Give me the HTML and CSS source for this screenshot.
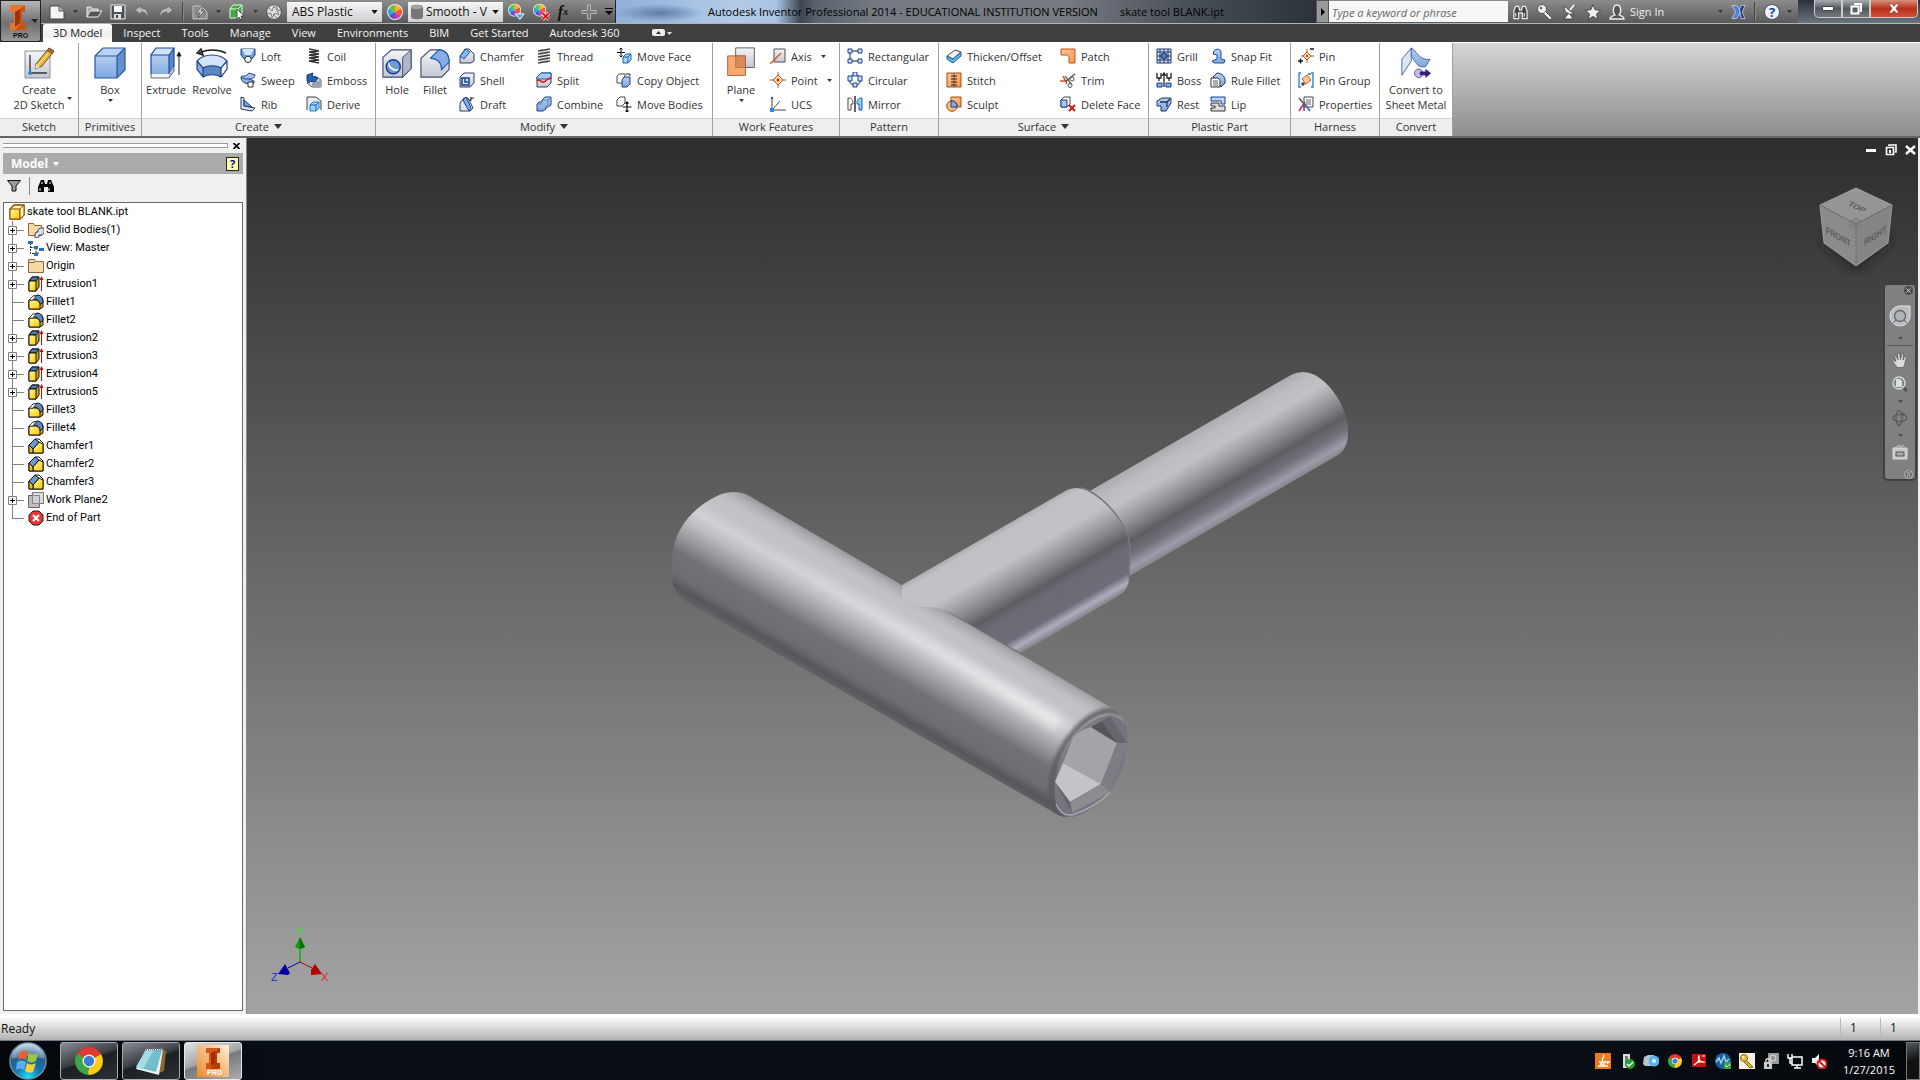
FILE: index.html
```html
<!DOCTYPE html>
<html lang="en">
<head>
<meta charset="utf-8">
<title>Autodesk Inventor Professional 2014</title>
<link rel="stylesheet" href="styles.css">
</head>
<body>
<svg class="sprite" width="0" height="0" aria-hidden="true">
  <defs>
    <linearGradient id="blue" x1="0" y1="0" x2="0" y2="1"><stop offset="0" stop-color="#b4cdf0"/><stop offset="1" stop-color="#7fa8de"/></linearGradient>
    <linearGradient id="grey" x1="0" y1="0" x2="0" y2="1"><stop offset="0" stop-color="#f4f5f8"/><stop offset="1" stop-color="#c3c8d2"/></linearGradient>
    <linearGradient id="gold" x1="0" y1="0" x2="1" y2="1"><stop offset="0" stop-color="#fff9a0"/><stop offset="1" stop-color="#ffc800"/></linearGradient>
    <linearGradient id="orange" x1="0" y1="0" x2="1" y2="1"><stop offset="0" stop-color="#ffc493"/><stop offset="1" stop-color="#f59a55"/></linearGradient>
  </defs>
  <symbol id="caret" viewBox="0 0 8 5"><path d="M0 0h8L4 5z" fill="currentColor"/></symbol>
  <symbol id="new" viewBox="0 0 16 16"><path d="M1 2h9l5 5v8H1z" fill="#f4f4f4" stroke="#444"/><path d="M10 2v5h5" fill="#bbb" stroke="#555"/></symbol>
  <symbol id="open" viewBox="0 0 16 16"><path d="M1 13V3h4l1 2h6v2" fill="#aaa" stroke="#eee"/><path d="M1 13l3-6h12l-4 6z" fill="#555" stroke="#eee"/></symbol>
  <symbol id="save" viewBox="0 0 16 16"><path d="M1 1h14v14H1z" fill="#4a5058" stroke="#eee"/><path d="M4 2h8v6H4z" fill="#fff"/><path d="M4 10h7v5H4z" fill="#ddd"/><path d="M6 11h2v3H6z" fill="#444"/></symbol>
  <symbol id="undo" viewBox="0 0 16 16"><path d="M1 6l6-5v3c5 0 8 4 7 10-1-4-3-6-7-6v3z" fill="#b8b8b8" stroke="#666"/></symbol>
  <symbol id="redo" viewBox="0 0 16 16"><path d="M15 6L9 1v3C4 4 1 8 2 14c1-4 3-6 7-6v3z" fill="#b8b8b8" stroke="#666"/></symbol>
  <symbol id="update" viewBox="0 0 16 16"><path d="M1 2h8l6 6v7H1z" fill="#8c8c8c" stroke="#c5c5c5"/><path d="M10 2l-6 7h4l-2 5 7-7H9l3-5z" fill="#c9c9c9" stroke="#666"/></symbol>
  <symbol id="pick" viewBox="0 0 16 16"><path d="M1 5l3-4h9v9l-3 4H1z" fill="#41a941" stroke="#d8ffd8"/><path d="M1 5h8v9M9 5l4-4" fill="none" stroke="#eaffea"/><path d="M8 5v10l2-2 2 3 1-1-1-3h3z" fill="#fff" stroke="#222" stroke-width=".7"/></symbol>
  <symbol id="ball" viewBox="0 0 16 16"><circle cx="8" cy="8" r="7.4" fill="#dcdcdc" stroke="#555"/><path d="M3 4l3 3 2-5 3 4 2 5-4-2-3 5-1-5-4 1M10 2l2 4 3 1M7 10l4 4" fill="none" stroke="#686868" stroke-width=".8"/></symbol>
  <symbol id="wheel" viewBox="0 0 16 16"><circle cx="8" cy="8" r="8" fill="#eee"/><path d="M8 8V1a7 7 0 016 3.500z" fill="#ffb02e"/><path d="M8 8l6-3.500a7 7 0 010 7z" fill="#f4562a"/><path d="M8 8l6 3.500A7 7 0 018 15z" fill="#d43a9a"/><path d="M8 8v7a7 7 0 01-6-3.500z" fill="#5a4ed0"/><path d="M8 8l-6 3.500a7 7 0 010-7z" fill="#28a4d8"/><path d="M8 8L2 4.500A7 7 0 018 1z" fill="#62c63a"/></symbol>
  <symbol id="wheeladd" viewBox="0 0 18 18"><use href="#wheel" width="14" height="14"/><path d="M8 11h9l-4.500 6z" fill="#35b4f0" stroke="#fff"/></symbol>
  <symbol id="wheeldel" viewBox="0 0 18 18"><use href="#wheel" width="14" height="14"/><path d="M10 10l7 7m0-7l-7 7" stroke="#fff" stroke-width="3.500"/><path d="M10 10l7 7m0-7l-7 7" stroke="#e01414" stroke-width="2.200"/></symbol>
  <symbol id="plus" viewBox="0 0 16 16"><path d="M6.500 1h3v5.500H15v3H9.500V15h-3V9.500H1v-3h5.500z" fill="#7a7a7a" stroke="#b5b5b5"/></symbol>
  <symbol id="binoc" viewBox="0 0 18 16"><path d="M2 15V7l2-5h3l1 4h2l1-4h3l2 5v8h-5V9H7v6z" fill="#444" stroke="#eee" stroke-width="1.300"/><path d="M4 9v4m9-4v4" stroke="#fff"/></symbol>
  <symbol id="key" viewBox="0 0 16 16"><path d="M8 7l7 7-2 2-7-7" fill="#fff" stroke="#444" stroke-width=".8"/><circle cx="5" cy="5" r="4.500" fill="#eee" stroke="#444" stroke-width=".8"/><circle cx="4" cy="4" r="1.200" fill="#555"/></symbol>
  <symbol id="dish" viewBox="0 0 16 16"><path d="M3 2c0 6 4 9 10 8zM7 10l-4 5h9l-3-5" fill="#f4f4f4" stroke="#333" stroke-width=".8"/><path d="M9 6l4-5" stroke="#fff" stroke-width="1.500"/></symbol>
  <symbol id="star" viewBox="0 0 16 16"><path d="M8 .8l2.200 5 5.300.5-4 3.600 1.200 5.300L8 12.400l-4.700 2.800 1.200-5.300-4-3.600 5.300-.5z" fill="#eee" stroke="#333" stroke-width=".8"/></symbol>
  <symbol id="user" viewBox="0 0 16 16"><path d="M1 15c0-3 3-3 5-4-3-3-2-10 2-10s5 7 2 10c2 1 5 1 5 4z" fill="#555" stroke="#eee" stroke-width="1.300"/></symbol>
  <symbol id="exch" viewBox="0 0 16 16"><path d="M1 1h5l4 5-1 4-3 5H1l4-7z" fill="#4f80d8" stroke="#dfe8ff" stroke-width=".7"/><path d="M15 1h-4L9 5l1 5 1 5h4l-3-7z" fill="#22407e" stroke="#dfe8ff" stroke-width=".7"/></symbol>
  <symbol id="sketch" viewBox="0 0 32 32"><path d="M2 4h25v27H2z" fill="url(#grey)" stroke="#8a8e98"/><path d="M7 8v18h17" fill="none" stroke="#333" stroke-width="1.300"/><circle cx="7" cy="26" r="2" fill="#2a86e0"/><path d="M13 17L26 1l5 3-12 15-7 3z" fill="#f3b52c" stroke="#5a4a30"/><path d="M15 18L28 3" stroke="#fff3b0"/><path d="M26 1l5 3-2 3-5-3z" fill="#a86a3a" stroke="#5a4a30" stroke-width=".5"/><path d="M13 17l-1 5 5-2z" fill="#f4e2c0"/></symbol>
  <symbol id="box" viewBox="0 0 32 32"><path d="M1 9h22v22H1z" fill="url(#blue)"/><path d="M1 9l8-8h22l-8 8z" fill="#b9d3f5"/><path d="M23 9l8-8v22l-8 8z" fill="#6690ca"/><path d="M1 9l8-8h22v22l-8 8H1zM1 9h22v22M23 9l8-8" fill="none" stroke="#2b58a5" stroke-width="1.200"/></symbol>
  <symbol id="extrude" viewBox="0 0 32 32"><path d="M1 8h18v23H1z" fill="url(#blue)"/><path d="M1 8l5-7h18l-5 7z" fill="#d2e3fa"/><path d="M19 8l5-7v23l-5 7z" fill="#5d86c2"/><path d="M1 27h18v4H1z" fill="#f2f4f8"/><path d="M19 27l5-7v4l-5 7z" fill="#c4cad6"/><path d="M1 27V8l5-7h18v19M1 8h18v19M19 8l5-7" fill="none" stroke="#1c4aa8" stroke-width="1.200"/><path d="M1 27v4h18l5-7v-4" fill="none" stroke="#666"/><path d="M29 28V6M27 9l2-4 2 4z" stroke="#222" fill="#222"/></symbol>
  <symbol id="revolve" viewBox="0 0 32 32"><path d="M1 14c7-8 23-8 30 0l-6 7c-5-3-13-3-18 0z" fill="#d2e3fa"/><path d="M7 21c5-3 13-3 18 0v9c-5-3-13-3-18 0z" fill="#5d86c2"/><path d="M1 14l6 7v9l-6-8z" fill="#88afe2"/><path d="M31 14l-6 7v9l6-8z" fill="#fff"/><path d="M1 14c7-8 23-8 30 0v8l-6 8c-5-3-13-3-18 0l-6-8zM1 14l6 7c5-3 13-3 18 0l6-7M7 21v9M25 21v9" fill="none" stroke="#1c3f80" stroke-width="1.200"/><path d="M3 6c8-4 19-4 27 0M5 2L1 6l6 2z" fill="none" stroke="#222" stroke-width="1.500"/></symbol>
  <symbol id="hole" viewBox="0 0 32 32"><path d="M1 10l9-8h21v20l-9 9H1z" fill="url(#grey)" stroke="#3a4a70" stroke-width="1.200"/><path d="M22 10l9-8v20l-9 9z" fill="#b2b7c4" stroke="#3a4a70"/><circle cx="12" cy="20" r="7.500" fill="#6f9ad8" stroke="#123a8a" stroke-width="1.500"/><path d="M7 14a8 8 0 0012 9C12 23 8 20 7 14" fill="#fff"/></symbol>
  <symbol id="fillet" viewBox="0 0 32 32"><path d="M1 11l10-9h10c7 1 10 6 10 12v9l-8 8H1z" fill="url(#grey)" stroke="#3a4a70" stroke-width="1.200"/><path d="M11 11l9-9c7 0 11 5 11 13l-8 8c0-7-4-12-12-12" fill="#85ade6" stroke="#1c56b4" stroke-width="1.200"/></symbol>
  <symbol id="plane" viewBox="0 0 32 36"><path d="M10 1h21v22H10z" fill="url(#grey)" stroke="#4a4f5a"/><path d="M1 10h20v22H1z" fill="#f7a063" fill-opacity=".9" stroke="#b4571a"/><path d="M10 10h11v13H10z" fill="#d98a58" stroke="#8a5a3a" stroke-width=".6"/></symbol>
  <symbol id="convert" viewBox="0 0 32 34"><path d="M1 13L11 1v14L1 30z" fill="#d8e6f6" stroke="#44669a"/><path d="M11 1c5 2 8 14 20 12l-5 8c-9 2-11-7-15-11z" fill="url(#blue)" stroke="#44669a"/><circle cx="19" cy="28" r="4.500" fill="#c9bdf0" stroke="#5a4aa0"/><path d="M20 26h6v-3l6 5-6 5v-3h-6z" fill="#3a1f7a"/></symbol>
  <symbol id="loft" viewBox="0 0 16 16"><path d="M1 1h14v6l-4 5H5L1 7z" fill="#6f9ad8" stroke="#1f3f80"/><path d="M2 1h12l-3 6H5z" fill="#d2e3fa"/><circle cx="8" cy="11.500" r="3.200" fill="#fff" stroke="#333"/></symbol>
  <symbol id="sweep" viewBox="0 0 16 16"><path d="M1 5c2-2 4 0 6-2l2-2 6 2c-1 4-3 4-6 4l5 2v2l-3 1c-4 0-10-1-10-7z" fill="url(#blue)" stroke="#1f3f80"/><path d="M8 10h5v5H8z" fill="#fff" stroke="#333"/><path d="M1 5l4 2 4 0" fill="none" stroke="#1f3f80"/></symbol>
  <symbol id="rib" viewBox="0 0 16 16"><path d="M1 1l3 1v8l11 2-3 3-11-2z" fill="#dfe6f2" stroke="#223a66"/><path d="M4 4l8 7-8-1z" fill="#6fa0e4" stroke="#1f3f80"/></symbol>
  <symbol id="coil" viewBox="0 0 16 16"><path d="M3 1l10 2M3 4l10-1M3 4l10 2M3 7l10-1M3 7l10 2M3 10l10-1M3 10l10 2M3 13l10-1M3 13l10 2" stroke="#333" stroke-width="1.300"/></symbol>
  <symbol id="emboss" viewBox="0 0 16 16"><path d="M1 11l8-7 6 4v7H6z" fill="#d5dae4" stroke="#555d70"/><path d="M6 15v-4l9-3v7z" fill="#9aa2b2"/><path d="M1 3l6-2-1 3 6 2-3 4-5-1-1 2-2-2z" fill="#2562b4" stroke="#153b7c"/></symbol>
  <symbol id="derive" viewBox="0 0 16 16"><path d="M1 14V1h9l5 4v9" fill="#e8eaee" stroke="#444"/><path d="M4 9l3-3h6v6l-3 3H4z" fill="#9cd0f8" stroke="#1d82c4"/><path d="M4 9h6v6m0-6l3-3" fill="none" stroke="#1d62b4"/></symbol>
  <symbol id="chamfer" viewBox="0 0 16 16"><path d="M1 8l5-7h4l5 5v7l-3 2H1z" fill="url(#grey)" stroke="#2c3c60"/><path d="M1 8l6-7 4 3-6 7z" fill="#8bb5ec" stroke="#1c56b4"/></symbol>
  <symbol id="shell" viewBox="0 0 16 16"><path d="M1 5l4-4h10v10l-4 4H1z" fill="url(#grey)" stroke="#2c3c60"/><path d="M3 6h7v7H3z" fill="#dbe8fb" stroke="#16408c" stroke-width="1.500"/><path d="M6 7v3h3" fill="none" stroke="#16408c" stroke-width="1.500"/></symbol>
  <symbol id="draft" viewBox="0 0 16 16"><path d="M1 7l4-5h4l5 10-3 3H1z" fill="#dfe3ea" stroke="#2c3c60"/><path d="M4 4l3-3 5 11-2 3z" fill="#85b0ea" stroke="#16408c"/><path d="M11 5c0-2 1-3 4-3M12 1v4" fill="none" stroke="#222"/></symbol>
  <symbol id="thread" viewBox="0 0 16 16"><path d="M4 1h8v14H4z" fill="#ddd"/><path d="M2 3l12-2M2 6l12-2M2 9l12-2M2 12l12-2M2 15l12-2" stroke="#444" stroke-width="1.300"/></symbol>
  <symbol id="split" viewBox="0 0 16 16"><path d="M1 5l4-4h10v10l-4 4H1z" fill="url(#grey)" stroke="#2c3c60"/><path d="M1 5l4-4h10v6H1z" fill="#a8c8f2" stroke="#1c56b4"/><path d="M1 9c3-3 4 2 7 1s3-4 7-4" fill="none" stroke="#e01818" stroke-width="1.600"/></symbol>
  <symbol id="combine" viewBox="0 0 16 16"><path d="M6 4l3-3h6v8l-3 2h-2v2l-3 2H1V8l2-2h3z" fill="url(#blue)" stroke="#1f3f80"/><path d="M6 4h6v7M12 4l3-3M1 8h5" fill="none" stroke="#5c82bd"/></symbol>
  <symbol id="moveface" viewBox="0 0 16 16"><path d="M5 0v9M1 4.500h8M3.500 1.500L5 0l1.500 1.500M3.500 7.500L5 9l1.500-1.500" fill="none" stroke="#111"/><path d="M7 9l3-3h5v6l-3 3H7z" fill="#a8d4f8" stroke="#1b5fae"/><path d="M7 9h5v6m0-6l3-3" fill="none" stroke="#1b5fae"/></symbol>
  <symbol id="copyobj" viewBox="0 0 16 16"><path d="M1 4l2-2h6v6l-2 3H1z" fill="#fff" stroke="#444"/><path d="M6 8l2-3h6v7l-3 3H6z" fill="url(#blue)" stroke="#1f3f80"/><path d="M10 2h4v2" fill="none" stroke="#222"/></symbol>
  <symbol id="movebody" viewBox="0 0 16 16"><path d="M1 4l3-3h5v6l-3 3H1z" fill="#fff" stroke="#444"/><path d="M11 6v10M6.500 11h9M9.500 7.500L11 6l1.500 1.500M9.500 14.500L11 16l1.500-1.500" fill="none" stroke="#111" stroke-width="1.200"/></symbol>
  <symbol id="axis" viewBox="0 0 16 16"><path d="M4 1h11v13H4z" fill="url(#grey)" stroke="#4a4f5a"/><path d="M0 16L11 5" stroke="#d8591a" stroke-width="1.500"/></symbol>
  <symbol id="point" viewBox="0 0 16 16"><path d="M8 0v16M0 8h16" stroke="#b4571a"/><path d="M8 3l5 5-5 5-5-5z" fill="#ffd2ae" stroke="#c05a1a"/><circle cx="8" cy="8" r="1.300" fill="#7a3200"/></symbol>
  <symbol id="ucs" viewBox="0 0 16 16"><path d="M2 14V1M2 14h14M2 14l8-9M1 3l1-2 1 2" fill="none" stroke="#444"/><path d="M0 12h4v4H0z" fill="#2a86e0"/></symbol>
  <symbol id="rect" viewBox="0 0 16 16"><path d="M3 3h10M3 3v10h10" fill="none" stroke="#222"/><path d="M1 1h4v4H1zM11 1h4v4h-4zM1 11h4v4H1zM11 11h4v4h-4z" fill="#cfe2fa" stroke="#163f94"/></symbol>
  <symbol id="circ" viewBox="0 0 16 16"><circle cx="8" cy="8" r="5.500" fill="none" stroke="#222"/><path d="M6 0h4v4H6zM1 4h4v5H1zM11 4h4v5h-4zM6 11h4v4H6z" fill="#cfe2fa" stroke="#163f94"/></symbol>
  <symbol id="mirror" viewBox="0 0 16 16"><path d="M8 0v16" stroke="#222" stroke-width="1.400"/><path d="M1 2c4 0 5 2 5 6H4v6H1z" fill="#fff" stroke="#444"/><path d="M15 2c-4 0-5 2-5 6h2v6h3z" fill="#8bd0f8" stroke="#1b5fae"/></symbol>
  <symbol id="thicken" viewBox="0 0 16 16"><path d="M1 8l8-6 6 2-8 7z" fill="#f4f4f4" stroke="#444"/><path d="M1 8l6 3 8-7v4l-8 7-6-4z" fill="#5fb5ee" stroke="#1b5f90"/></symbol>
  <symbol id="stitch" viewBox="0 0 16 16"><path d="M1 1h14v14H1z" fill="url(#orange)" stroke="#a04c10"/><path d="M8 1v14" stroke="#a04c10"/><path d="M5 4h6M5 7h6M5 10h6M5 13h6" stroke="#222"/></symbol>
  <symbol id="sculpt" viewBox="0 0 16 16"><path d="M5 1h10v10H5z" fill="url(#orange)" stroke="#a04c10"/><circle cx="6" cy="10" r="5.300" fill="#ffb880" stroke="#a04c10"/><path d="M5 5c4 0 6 3 6 6H5z" fill="#7fb0f0" stroke="#163f94"/></symbol>
  <symbol id="patch" viewBox="0 0 16 16"><path d="M1 1h14v14H9v-5c0-2-1-3-3-3H1z" fill="url(#orange)" stroke="#b4571a"/></symbol>
  <symbol id="trim" viewBox="0 0 16 16"><path d="M0 9h7M3 4l4 8" stroke="#c8591a" stroke-width="1.500"/><path d="M15 2L6 9M5 4l7 9" stroke="#444" stroke-width="1.200"/><circle cx="12" cy="7" r="2" fill="none" stroke="#555"/><circle cx="10" cy="13.500" r="2" fill="none" stroke="#555"/></symbol>
  <symbol id="delface" viewBox="0 0 16 16"><path d="M1 4l3-3h6v7l-3 3H1z" fill="#fff" stroke="#444"/><path d="M1 4h6v7H1z" fill="#a8c8f2" stroke="#1f3f80"/><path d="M9 9l6 6m0-6l-6 6" stroke="#d81818" stroke-width="2"/></symbol>
  <symbol id="grill" viewBox="0 0 16 16"><path d="M1 1h14v14H1z" fill="#d5e2f5" stroke="#1c3464"/><path d="M4 1v14M8 1v14M12 1v14M1 4h14M1 8h14M1 12h14" stroke="#1c3464"/><circle cx="8" cy="8" r="3" fill="#4e78b8" stroke="#1c3464"/></symbol>
  <symbol id="boss" viewBox="0 0 16 16"><path d="M1 1v5h2v3M5 1v5H3M15 1v5h-2v3M11 1v5h2M8 15V2M6 4l2-3 2 3" fill="none" stroke="#222" stroke-width="1.300"/><path d="M1 11h5v4H1zM10 11h5v4h-5z" fill="#7fb0f0" stroke="#163f94"/></symbol>
  <symbol id="rest" viewBox="0 0 16 16"><path d="M1 5l5-3h9v5l-5 8H5V10H1z" fill="url(#blue)" stroke="#1c3464"/><path d="M4 6h7l3-3M11 6v5" fill="none" stroke="#1c3464" stroke-width="1.300"/></symbol>
  <symbol id="snap" viewBox="0 0 16 16"><path d="M4 3c2-3 7-2 7 1v7l4 1-1 3H4l-2-2 5-2V7L3 6z" fill="url(#blue)" stroke="#1c4a9c"/></symbol>
  <symbol id="rule" viewBox="0 0 16 16"><path d="M3 5l4-4c5 0 9 4 8 10l-4 4z" fill="url(#blue)" stroke="#1c3464"/><path d="M1 6h7l2 2v7H1z" fill="#fff" stroke="#333"/><path d="M3 9h5M3 11h5M3 13h5" stroke="#333" stroke-width=".8"/></symbol>
  <symbol id="lip" viewBox="0 0 16 16"><path d="M1 1h14v7h-4V5H1z" fill="#bcd5f6" stroke="#163f94"/><path d="M1 15h14v-5H9V7H1v3h4v2H1z" fill="#ddd" stroke="#333"/></symbol>
  <symbol id="pin" viewBox="0 0 16 16"><path d="M9 1v14M3 8h13" stroke="#b4571a"/><path d="M9 4l4 4-4 4-4-4z" fill="#ffd2ae" stroke="#c05a1a"/><circle cx="9" cy="8" r="1" fill="#7a3200"/><path d="M12 1h4M0 13h5M2.500 10.500v5" stroke="#111" stroke-width="1.300"/></symbol>
  <symbol id="pingroup" viewBox="0 0 16 16"><path d="M3 1H1v14h2M13 1h2v14h-2" fill="none" stroke="#2a86e0" stroke-width="1.400"/><path d="M9 3l4 5-5 4-4-5z" fill="#ffc9a0" stroke="#c05a1a"/><path d="M10 2h3M3 12h4M5 10v4" stroke="#111"/></symbol>
  <symbol id="props" viewBox="0 0 16 16"><path d="M6 1h9v10H6z" fill="#fff" stroke="#444"/><path d="M8 4h5M8 6h5M8 8h5" stroke="#666"/><path d="M1 2l5 6v7" fill="none" stroke="#555" stroke-width="1.500"/><path d="M1 15l6-9" stroke="#d02050" stroke-width="1.500"/><path d="M6 7l6 8" stroke="#2a6ad0" stroke-width="1.500"/></symbol>
  <symbol id="t-part" viewBox="0 0 16 16"><path d="M1 5l4-4h10v10l-4 4H1z" fill="#fff2b0" stroke="#8a4a00" stroke-width="1.300"/><path d="M1 5h10v10H1z" fill="url(#gold)" stroke="#8a4a00"/><path d="M11 5l4-4v10l-4 4z" fill="#fff6c0" stroke="#8a4a00"/></symbol>
  <symbol id="t-folder" viewBox="0 0 16 16"><path d="M.500 14.500v-13h6l1 2h8v11z" fill="#f6d9a4" stroke="#8b6a38"/><path d="M1 4.500h6" stroke="#8b6a38"/></symbol>
  <symbol id="t-bodies" viewBox="0 0 16 16"><path d="M.500 13.500V1.500h5l1 2h7v10z" fill="#f6d9a4" stroke="#8b6a38"/><path d="M10 8l2-2h4v5l-2 2h-3v2l-2 1H7v-4l1-2h2z" fill="#dde0ec" stroke="#3c4258"/></symbol>
  <symbol id="t-view" viewBox="0 0 16 16"><path d="M2.500 3v10.500H6M2.500 7.500H6M8 8v5h3" fill="none" stroke="#222" stroke-dasharray="2 1"/><path d="M0 1h5v3H0zM6 6h4v3H6zM11 8h5v3h-5zM6 13h4v3H6z" fill="#2f6fb4"/></symbol>
  <symbol id="t-ext" viewBox="0 0 16 16"><path d="M1 5l3-4h7v10l-3 4H1z" fill="#d2a800" stroke="#111"/><path d="M1 5l3-4h7L8 5z" fill="#4c78b8" stroke="#111"/><path d="M1 5h7v10H1z" fill="url(#gold)" stroke="#111"/><path d="M13.500 15V3" stroke="#d80000"/><path d="M11.500 4l2-4 2 4z" fill="#d80000"/></symbol>
  <symbol id="t-fil" viewBox="0 0 16 16"><path d="M1 6l4-4h5c4 0 5 3 5 6v5l-3 2H1z" fill="#d8ac00" stroke="#111"/><path d="M5 5l4-4c4 0 6 3 6 7l-3 3c0-4-3-6-7-6" fill="#5b87c4" stroke="#111"/><path d="M1 6h5c4 0 6 2 6 5v4H1z" fill="url(#gold)" stroke="#111"/><path d="M1 6l4-4h3L5 6z" fill="#fff" stroke="#111" stroke-width=".6"/></symbol>
  <symbol id="t-cha" viewBox="0 0 16 16"><path d="M1 7l6-6h4l4 4v10H1z" fill="#fff" stroke="#111"/><path d="M5 11l6-7 4 2v9H5z" fill="url(#gold)" stroke="#111"/><path d="M1 7l6-6 4 3-6 7z" fill="#6d97cf" stroke="#111"/><path d="M1 7l4 4v4H1z" fill="#e8c020" stroke="#111"/></symbol>
  <symbol id="t-wp" viewBox="0 0 16 16"><path d="M4.500.500h11v11h-11z" fill="#ddd" stroke="#777"/><path d="M.500 3.500h11v12H.500z" fill="#bdbdbd" stroke="#666"/><path d="M4.500 3.500h7v8h-7z" fill="#d0d0d0" stroke="#888"/></symbol>
  <symbol id="t-end" viewBox="0 0 16 16"><path d="M5 1h6l4 4v6l-4 4H5l-4-4V5z" fill="#e33" stroke="#222"/><path d="M5 5l6 6m0-6l-6 6" stroke="#fff" stroke-width="2.200"/></symbol>
  <symbol id="expand" viewBox="0 0 9 9"><path d="M.500.500h8v8h-8z" fill="#fff" stroke="#808080"/><path d="M2 4.500h5M4.500 2v5" stroke="#000"/></symbol>
  <symbol id="chrome" viewBox="0 0 28 28"><path d="M14 14L1.900 7A14 14 0 0126.100 7z" fill="#df3a2d"/><path d="M14 14L26.100 7A14 14 0 0114 28z" fill="#fccb1a"/><path d="M14 14v14A14 14 0 011.900 7z" fill="#3fa648"/><path d="M14 7.500h12.500L24 4H12z" fill="#df3a2d"/><path d="M8 17L2 7l4 1 4 5z" fill="#3fa648"/><path d="M20 17l-6 11-1-3 3-6z" fill="#fccb1a"/><circle cx="14" cy="14" r="6.500" fill="#fff"/><circle cx="14" cy="14" r="5.200" fill="#3c7fd0"/></symbol>
</svg>

<header class="top">
  <button class="app-button" aria-label="Application menu">
    <svg width="38" height="40" viewBox="0 0 38 40"><path d="M8 4h15v7h-3v11h4v7H8v-7h4V11H8z" fill="#c95216"/><path d="M8 4h15l-5 4v15l-5 6H8v-7h4V11H8z" fill="#e8762c"/><path d="M13 11l5-3v14l-5 4z" fill="#9c3308"/><path d="M29 18h7l-3 4z" fill="#222"/><text x="11" y="37" class="pro">PRO</text></svg>
  </button>
  <div class="top-rows">
    <div class="titlebar">
      <div class="quick">
        <button aria-label="New"><svg width="16" height="16"><use href="#new"/></svg></button><svg class="mini" width="5" height="3"><use href="#caret"/></svg>
        <button aria-label="Open"><svg width="16" height="16"><use href="#open"/></svg></button>
        <button aria-label="Save"><svg width="16" height="16"><use href="#save"/></svg></button>
        <button aria-label="Undo"><svg width="16" height="16"><use href="#undo"/></svg></button>
        <button aria-label="Redo"><svg width="16" height="16"><use href="#redo"/></svg></button>
        <i class="sep"></i>
        <button aria-label="Update"><svg width="16" height="16"><use href="#update"/></svg></button><svg class="mini" width="5" height="3"><use href="#caret"/></svg>
        <button aria-label="Select"><svg width="16" height="16"><use href="#pick"/></svg></button><svg class="mini" width="5" height="3"><use href="#caret"/></svg>
        <button aria-label="Material browser"><svg width="16" height="16"><use href="#ball"/></svg></button>
        <span class="combo"><select aria-label="Material"><option>ABS Plastic</option></select><svg width="7" height="4"><use href="#caret"/></svg></span>
        <button aria-label="Appearance browser"><svg width="16" height="16"><use href="#wheel"/></svg></button>
        <span class="combo look"><svg class="swatch" width="14" height="16" viewBox="0 0 14 16"><path d="M1 3c0-3 12-3 12 0v10c0 3-12 3-12 0z" fill="#777"/><ellipse cx="7" cy="3" rx="6" ry="2" fill="#a5a5a5"/></svg><select aria-label="Appearance"><option>Smooth - V</option></select><svg width="7" height="4"><use href="#caret"/></svg></span>
        <button aria-label="Adjust"><svg width="17" height="18"><use href="#wheeladd"/></svg></button>
        <button aria-label="Clear"><svg width="17" height="18"><use href="#wheeldel"/></svg></button>
        <button class="fx" aria-label="Parameters">f<sub>x</sub></button>
        <button aria-label="Add"><svg width="16" height="16"><use href="#plus"/></svg></button>
        <button class="more" aria-label="Customize"><svg width="8" height="7" viewBox="0 0 8 7"><path d="M0 0h8v1H0zM0 3h8L4 7z"/></svg></button>
      </div>
      <h1 class="title"><span>Autodesk Inventor Professional 2014 - EDUCATIONAL INSTITUTION VERSION</span><span>skate tool BLANK.ipt</span></h1>
      <div class="info">
        <button class="collapse" aria-label="Collapse search"><svg width="4" height="8" viewBox="0 0 4 8"><path d="M0 0l4 4-4 4z"/></svg></button>
        <input type="search" placeholder="Type a keyword or phrase" aria-label="Search help">
        <button aria-label="Search"><svg width="17" height="16"><use href="#binoc"/></svg></button>
        <button aria-label="Subscription"><svg width="16" height="16"><use href="#key"/></svg></button>
        <button aria-label="Communication"><svg width="16" height="16"><use href="#dish"/></svg></button>
        <button aria-label="Favorites"><svg width="16" height="16"><use href="#star"/></svg></button>
        <button class="signin"><svg width="16" height="16"><use href="#user"/></svg>Sign In<svg class="mini" width="5" height="3"><use href="#caret"/></svg></button>
        <button aria-label="Exchange"><svg width="15" height="16"><use href="#exch"/></svg></button>
        <i class="sep"></i>
        <button class="help" aria-label="Help"><span>?</span><svg class="mini" width="5" height="3"><use href="#caret"/></svg></button>
      </div>
      <div class="window-buttons">
        <button aria-label="Minimize"><svg width="12" height="5" viewBox="0 0 12 5"><path d="M.500.500h11v4H.500z" fill="#fff" stroke="#444"/></svg></button>
        <button aria-label="Restore"><svg width="12" height="12" viewBox="0 0 12 12"><path d="M4 1h7v8M1.500 3.500h7v7h-7z" fill="none" stroke="#fff" stroke-width="2"/></svg></button>
        <button class="close" aria-label="Close"><svg width="12" height="11" viewBox="0 0 12 11"><path d="M1 1h3l2 2.500L8 1h3L8 5.500 11 10H8L6 7.500 4 10H1l3-4.500z" fill="#fff" stroke="#633" stroke-width=".5"/></svg></button>
      </div>
    </div>
    <nav class="tabs">
      <a href="#" class="active">3D Model</a><a href="#">Inspect</a><a href="#">Tools</a><a href="#">Manage</a><a href="#">View</a><a href="#">Environments</a><a href="#">BIM</a><a href="#">Get Started</a><a href="#">Autodesk 360</a>
      <button aria-label="Minimize ribbon"><svg width="20" height="8" viewBox="0 0 20 8"><rect width="13" height="7" rx="2" fill="#eee"/><path d="M4 5l2.500-3L9 5z" fill="#333"/><path d="M15 3h5l-2.500 3z" fill="#eee"/></svg></button>
    </nav>
  </div>
</header>

<section class="ribbon">
  <div class="group g-sketch"><div class="tools">
    <button class="big"><svg width="32" height="32"><use href="#sketch"/></svg>Create<br>2D Sketch<svg class="corner" width="5" height="3"><use href="#caret"/></svg></button>
  </div><h2>Sketch</h2></div>
  <div class="group g-prim"><div class="tools">
    <button class="big"><svg width="32" height="32"><use href="#box"/></svg>Box<svg class="below" width="5" height="3"><use href="#caret"/></svg></button>
  </div><h2>Primitives</h2></div>
  <div class="group g-create"><div class="tools">
    <button class="big"><svg width="32" height="32"><use href="#extrude"/></svg>Extrude</button>
    <button class="big"><svg width="32" height="32"><use href="#revolve"/></svg>Revolve</button>
    <div class="stack">
      <button><svg><use href="#loft"/></svg>Loft</button><button><svg><use href="#sweep"/></svg>Sweep</button><button><svg><use href="#rib"/></svg>Rib</button>
      <button><svg><use href="#coil"/></svg>Coil</button><button><svg><use href="#emboss"/></svg>Emboss</button><button><svg><use href="#derive"/></svg>Derive</button>
    </div>
  </div><h2>Create <svg width="8" height="5"><use href="#caret"/></svg></h2></div>
  <div class="group g-modify"><div class="tools">
    <button class="big"><svg width="30" height="32"><use href="#hole"/></svg>Hole</button>
    <button class="big"><svg width="30" height="32"><use href="#fillet"/></svg>Fillet</button>
    <div class="stack">
      <button><svg><use href="#chamfer"/></svg>Chamfer</button><button><svg><use href="#shell"/></svg>Shell</button><button><svg><use href="#draft"/></svg>Draft</button>
      <button><svg><use href="#thread"/></svg>Thread</button><button><svg><use href="#split"/></svg>Split</button><button><svg><use href="#combine"/></svg>Combine</button>
      <button><svg><use href="#moveface"/></svg>Move Face</button><button><svg><use href="#copyobj"/></svg>Copy Object</button><button><svg><use href="#movebody"/></svg>Move Bodies</button>
    </div>
  </div><h2>Modify <svg width="8" height="5"><use href="#caret"/></svg></h2></div>
  <div class="group g-work"><div class="tools">
    <button class="big"><svg width="32" height="32"><use href="#plane"/></svg>Plane<svg class="below" width="5" height="3"><use href="#caret"/></svg></button>
    <div class="stack">
      <button><svg><use href="#axis"/></svg>Axis<svg class="drop"><use href="#caret"/></svg></button><button><svg><use href="#point"/></svg>Point<svg class="drop"><use href="#caret"/></svg></button><button><svg><use href="#ucs"/></svg>UCS</button>
    </div>
  </div><h2>Work Features</h2></div>
  <div class="group g-pattern"><div class="tools">
    <div class="stack">
      <button><svg><use href="#rect"/></svg>Rectangular</button><button><svg><use href="#circ"/></svg>Circular</button><button><svg><use href="#mirror"/></svg>Mirror</button>
    </div>
  </div><h2>Pattern</h2></div>
  <div class="group g-surface"><div class="tools">
    <div class="stack">
      <button><svg><use href="#thicken"/></svg>Thicken/Offset</button><button><svg><use href="#stitch"/></svg>Stitch</button><button><svg><use href="#sculpt"/></svg>Sculpt</button>
      <button><svg><use href="#patch"/></svg>Patch</button><button><svg><use href="#trim"/></svg>Trim</button><button><svg><use href="#delface"/></svg>Delete Face</button>
    </div>
  </div><h2>Surface <svg width="8" height="5"><use href="#caret"/></svg></h2></div>
  <div class="group g-plastic"><div class="tools">
    <div class="stack">
      <button><svg><use href="#grill"/></svg>Grill</button><button><svg><use href="#boss"/></svg>Boss</button><button><svg><use href="#rest"/></svg>Rest</button>
      <button><svg><use href="#snap"/></svg>Snap Fit</button><button><svg><use href="#rule"/></svg>Rule Fillet</button><button><svg><use href="#lip"/></svg>Lip</button>
    </div>
  </div><h2>Plastic Part</h2></div>
  <div class="group g-harness"><div class="tools">
    <div class="stack">
      <button><svg><use href="#pin"/></svg>Pin</button><button><svg><use href="#pingroup"/></svg>Pin Group</button><button><svg><use href="#props"/></svg>Properties</button>
    </div>
  </div><h2>Harness</h2></div>
  <div class="group g-convert"><div class="tools">
    <button class="big"><svg width="32" height="32"><use href="#convert"/></svg>Convert to<br>Sheet Metal</button>
  </div><h2>Convert</h2></div>
</section>

<main class="work">
  <aside class="browser">
    <div class="grip"><i></i><button aria-label="Close panel"><svg width="7" height="6" viewBox="0 0 7 6"><path d="M.500 0l6 6m0-6l-6 6" stroke="#000" stroke-width="1.600"/></svg></button></div>
    <div class="panel-head"><h2>Model <svg width="8" height="4"><use href="#caret"/></svg></h2><button aria-label="Panel help">?</button></div>
    <div class="panel-tools">
      <button aria-label="Filter"><svg width="14" height="12" viewBox="0 0 14 12"><path d="M.500.500h13L9 6v5H5V6z" fill="#999" stroke="#111"/></svg></button>
      <i></i>
      <button aria-label="Find"><svg width="16" height="14" viewBox="0 0 16 14"><path d="M0 13V8l3-7h3l1 4h2l1-4h3l3 7v5h-6V8H6v5z" fill="#000"/><path d="M2 9v3m9-3v3M4 3v2m8-2v2" stroke="#fff"/></svg></button>
    </div>
    <ul class="tree">
      <li class="root"><svg><use href="#t-part"/></svg>skate tool BLANK.ipt</li>
      <li><span class="stem"><button aria-label="Expand"><svg><use href="#expand"/></svg></button></span><svg><use href="#t-bodies"/></svg>Solid Bodies(1)</li>
      <li><span class="stem"><button aria-label="Expand"><svg><use href="#expand"/></svg></button></span><svg><use href="#t-view"/></svg>View: Master</li>
      <li><span class="stem"><button aria-label="Expand"><svg><use href="#expand"/></svg></button></span><svg><use href="#t-folder"/></svg>Origin</li>
      <li><span class="stem"><button aria-label="Expand"><svg><use href="#expand"/></svg></button></span><svg><use href="#t-ext"/></svg>Extrusion1</li>
      <li><span class="stem"></span><svg><use href="#t-fil"/></svg>Fillet1</li>
      <li><span class="stem"></span><svg><use href="#t-fil"/></svg>Fillet2</li>
      <li><span class="stem"><button aria-label="Expand"><svg><use href="#expand"/></svg></button></span><svg><use href="#t-ext"/></svg>Extrusion2</li>
      <li><span class="stem"><button aria-label="Expand"><svg><use href="#expand"/></svg></button></span><svg><use href="#t-ext"/></svg>Extrusion3</li>
      <li><span class="stem"><button aria-label="Expand"><svg><use href="#expand"/></svg></button></span><svg><use href="#t-ext"/></svg>Extrusion4</li>
      <li><span class="stem"><button aria-label="Expand"><svg><use href="#expand"/></svg></button></span><svg><use href="#t-ext"/></svg>Extrusion5</li>
      <li><span class="stem"></span><svg><use href="#t-fil"/></svg>Fillet3</li>
      <li><span class="stem"></span><svg><use href="#t-fil"/></svg>Fillet4</li>
      <li><span class="stem"></span><svg><use href="#t-cha"/></svg>Chamfer1</li>
      <li><span class="stem"></span><svg><use href="#t-cha"/></svg>Chamfer2</li>
      <li><span class="stem"></span><svg><use href="#t-cha"/></svg>Chamfer3</li>
      <li><span class="stem"><button aria-label="Expand"><svg><use href="#expand"/></svg></button></span><svg><use href="#t-wp"/></svg>Work Plane2</li>
      <li class="last"><span class="stem"></span><svg><use href="#t-end"/></svg>End of Part</li>
    </ul>
  </aside>

  <section class="canvas" aria-label="Graphics window">
    <svg class="scene" viewBox="247 138 1671 876">
      <defs>
        <linearGradient id="bar" gradientUnits="userSpaceOnUse" x1="746" y1="494" x2="684" y2="601"><stop offset="0" stop-color="#97989b"/><stop offset=".05" stop-color="#aeafb2"/><stop offset=".12" stop-color="#c0c1c5"/><stop offset=".23" stop-color="#c3c4c8"/><stop offset=".33" stop-color="#d0d0d5"/><stop offset=".43" stop-color="#bdbdc1"/><stop offset=".56" stop-color="#98989c"/><stop offset=".68" stop-color="#737277"/><stop offset=".85" stop-color="#6d6c71"/><stop offset=".93" stop-color="#56565b"/><stop offset="1" stop-color="#64646a"/></linearGradient>
        <linearGradient id="neck" gradientUnits="userSpaceOnUse" x1="902" y1="585" x2="961" y2="687"><stop offset="0" stop-color="#aeaeb1"/><stop offset=".05" stop-color="#c0c1c4"/><stop offset=".28" stop-color="#c1c2c6"/><stop offset=".36" stop-color="#adadb1"/><stop offset=".5" stop-color="#848488"/><stop offset=".61" stop-color="#5d5d61"/><stop offset=".68" stop-color="#6a6a74"/><stop offset=".87" stop-color="#6d6d79"/><stop offset=".94" stop-color="#adadbf"/><stop offset="1" stop-color="#85858f"/></linearGradient>
        <linearGradient id="shaft" gradientUnits="userSpaceOnUse" x1="1291" y1="375" x2="1338" y2="456"><stop offset="0" stop-color="#acabaf"/><stop offset=".1" stop-color="#bbbbbf"/><stop offset=".26" stop-color="#c1c2c6"/><stop offset=".38" stop-color="#aaaaae"/><stop offset=".53" stop-color="#858589"/><stop offset=".67" stop-color="#5e5e62"/><stop offset=".8" stop-color="#71717a"/><stop offset=".92" stop-color="#9c9caa"/><stop offset="1" stop-color="#85858e"/></linearGradient>
        <linearGradient id="shine" gradientUnits="userSpaceOnUse" x1="760" y1="550" x2="1065" y2="735"><stop offset="0" stop-color="#fff" stop-opacity="0"/><stop offset="1" stop-color="#fff" stop-opacity=".55"/></linearGradient>
        <linearGradient id="rim" x1="0" y1="0" x2="1" y2="1"><stop offset="0" stop-color="#88888e"/><stop offset=".5" stop-color="#73737b"/><stop offset="1" stop-color="#7e7e8c"/></linearGradient>
        <filter id="soft" x="-20%" y="-20%" width="140%" height="140%"><feGaussianBlur stdDeviation="5"/></filter>
        <filter id="rimsoft" x="-20%" y="-20%" width="140%" height="140%"><feGaussianBlur stdDeviation="2"/></filter>
        <clipPath id="barclip"><path d="M746 494L1112 708Q1127 716 1127 743C1127 775 1095 817 1067 817Q1060 817 1053 812L684 600Q672 592 672 575V560C673 530 692 508 717 496Q731 489 746 494z"/></clipPath>
      </defs>
      <path d="M1088 492L1291 375Q1302 369 1315 375C1330 383 1346 405 1348 428Q1349 448 1338 455L1126 578z" fill="url(#shaft)"/>
      <path d="M746 494L1112 708Q1127 716 1127 743C1127 775 1095 817 1067 817Q1060 817 1053 812L684 600Q672 592 672 575V560C673 530 692 508 717 496Q731 489 746 494z" fill="url(#bar)"/>
      <g clip-path="url(#barclip)">
        <path d="M775 551L1060 725" stroke="url(#shine)" stroke-width="16" filter="url(#soft)"/>
        <path d="M1130 722Q1122 710 1106 711C1085 715 1057 743 1052 780Q1050 812 1064 820" fill="none" stroke="#58585d" stroke-width="5" filter="url(#rimsoft)"/>
      </g>
      <path d="M902 585L1067 490Q1079 485 1091 492C1110 503 1128 525 1130 545L1129 577Q1129 589 1120 595L1021 653L970 624C950 611 938 606 922 607Q906 605 902 597z" fill="url(#neck)"/>
      <path d="M1079 488Q1085 488 1091 492C1110 503 1127 525 1130 545L1129 577" fill="none" stroke="#77777c" stroke-width="1.500"/>
      <path d="M1110 715C1096 716 1082 727 1073 737C1062 752 1056 773 1055 785C1054 806 1059 816 1069 817C1090 817 1118 790 1125 760Q1129 742 1127 728Q1122 716 1110 715z" fill="url(#rim)"/>
      <path d="M1056 804Q1061 816 1072 815Q1098 806 1110 792" fill="none" stroke="#a7a7b5" stroke-width="1.500"/>
      <path d="M1073 737Q1080 730 1091 727L1117 743L1101 784L1063 763z" fill="#a3a3a8"/>
      <path d="M1063 763L1101 784L1070 802L1055 782z" fill="#c2c4c8"/>
      <path d="M1091 727L1102 721L1117 743z" fill="#56565a"/>
      <path d="M1102 721L1110 716L1127 743H1117z" fill="#66676c"/>
      <path d="M1117 743H1127L1110 792L1101 784z" fill="#7d7d83"/>
      <path d="M1101 784L1110 792L1072 813L1070 802z" fill="#8b8b90"/>
      <path d="M1070 802L1072 813L1055 782z" fill="#66676c"/>
    </svg>
    <div class="mdi">
      <button aria-label="Minimize view"><svg width="12" height="5" viewBox="0 0 12 5"><path d="M1 1h10v3H1z" fill="#fff"/></svg></button>
      <button aria-label="Restore view"><svg width="12" height="12" viewBox="0 0 12 12"><path d="M4 2V1h7v7h-1M1.500 3.500h7v7h-7z" fill="none" stroke="#fff" stroke-width="1.600"/><path d="M4 6h2v3H4z" fill="#fff"/></svg></button>
      <button aria-label="Close view"><svg width="11" height="10" viewBox="0 0 11 10"><path d="M1 1l9 8m0-8L1 9" stroke="#fff" stroke-width="2.400"/></svg></button>
    </div>
    <svg class="cube" width="96" height="100" viewBox="0 0 96 100">
      <defs><filter id="blur6"><feGaussianBlur stdDeviation="6"/></filter></defs>
      <path d="M14 60L48 92 82 60 66 50H30z" fill="#222" filter="url(#blur6)"/>
      <path d="M48 9L84 26 48 45 12 26z" fill="#959595"/><path d="M12 26l36 19v42L16 64z" fill="#8b8b8b"/><path d="M84 26L48 45v42l32-23z" fill="#858585"/>
      <path d="M41 42l7-4 7 4v7l-7 4-7-4z" fill="#7c828a" opacity=".7"/>
      <path d="M12 26l36 19 36-19M48 45v42" fill="none" stroke="#6a6a6a" stroke-dasharray="3 1"/>
      <path d="M48 9L84 26 80 64 48 87 16 64 12 26z" fill="none" stroke="#9e9e9e"/>
      <g class="cube-text"><text transform="matrix(.9 .42 -.6 .6 39 26)">TOP</text><text transform="matrix(.8 .45 .05 1.100 18 54)">FRONT</text><text transform="matrix(.8 -.5 -.05 1.100 56 67)">RIGHT</text></g>
    </svg>
    <div class="navbar">
      <button class="tiny" aria-label="Close bar"><svg width="9" height="9" viewBox="0 0 9 9"><circle cx="4.500" cy="4.500" r="4.500" fill="#4c4c4c"/><path d="M2.500 2.500l4 4m0-4l-4 4" stroke="#ddd"/></svg></button>
      <button class="wheelnav" aria-label="Steering wheel"><svg width="22" height="22" viewBox="0 0 22 22"><path d="M11 1h10v10a10 10 0 11-10-10z" fill="#b9bcc0" stroke="#e2e2e2"/><circle cx="11" cy="11" r="5.500" fill="#b0b3b8" stroke="#5c6066" stroke-width="1.300"/><path d="M4 18l3-3m11 3l-3-3" stroke="#5c6066"/></svg></button>
      <svg class="mini" width="5" height="3"><use href="#caret"/></svg>
      <i></i>
      <button aria-label="Pan"><svg width="16" height="17" viewBox="0 0 16 17"><path d="M5 15.500C4 13 1 11 .500 8.500l1.500-.5 2 2L2.500 4 4 3.500 6 8 5.500 1.500 7.500 1l1 6.500L10 1.500l1.700.3L11 8l2-4 1.500.7L13 11c-.5 2-1 3-1.500 4.500z" fill="#dcdcdc" stroke="#555" stroke-width=".7"/></svg></button>
      <button aria-label="Zoom"><svg width="16" height="16" viewBox="0 0 16 16"><path d="M11 11l4 4" stroke="#555" stroke-width="3"/><circle cx="7" cy="7" r="6" fill="#788888" stroke="#d4d8d8" stroke-width="1.400"/><path d="M4 3h4l2 2v6H4z" fill="#ddd"/></svg></button>
      <svg class="mini" width="5" height="3"><use href="#caret"/></svg>
      <button aria-label="Orbit"><svg width="16" height="16" viewBox="0 0 16 16"><ellipse cx="8" cy="8" rx="7" ry="3.500" fill="none" stroke="#575757" stroke-width="1.200"/><ellipse cx="7" cy="8" rx="3" ry="7.500" fill="none" stroke="#575757" stroke-width="1.200"/><path d="M11 2v4M9 4h4" stroke="#575757"/></svg></button>
      <svg class="mini" width="5" height="3"><use href="#caret"/></svg>
      <button aria-label="Look at"><svg width="16" height="16" viewBox="0 0 16 16"><path d="M3 4l4-3 1 2 4-2" fill="none" stroke="#ccc"/><path d="M1 4h14v11H1z" fill="#c5c8ca" stroke="#ddd"/><path d="M4 8h8v4H4z" fill="#aaa" stroke="#555"/></svg></button>
      <button class="tiny low" aria-label="Bar options"><svg width="9" height="9" viewBox="0 0 9 9"><circle cx="4.500" cy="4.500" r="4" fill="#666" stroke="#bbb"/><path d="M2.500 3h4M3 5h3l-1.500 2z" stroke="#ddd" stroke-width=".8"/></svg></button>
    </div>
    <svg class="triad" width="60" height="64" viewBox="0 -4 60 64">
      <path d="M30 35V18" stroke="#00b800" stroke-width="1.500"/><path d="M25 20l5-10 5 10-5 2z" fill="#0a9a0a"/><path d="M30 10l5 10-5 2z" fill="#067006"/>
      <path d="M30 35l-12 6" stroke="#0000b8"/><path d="M8 47l7-10 5 9-2 2z" fill="#0000a8"/><path d="M30 35l12 6" stroke="#b80000"/><path d="M52 47l-7-10-4 6v5z" fill="#b00000"/>
      <g class="triad-text"><text x="26" y="9" fill="#28e028">Y</text><text x="1" y="54" fill="#2424e8">Z</text><text x="51" y="54" fill="#e82424">X</text></g>
    </svg>
  </section>
</main>

<footer class="status"><span class="msg">Ready</span><span class="cell">1</span><span class="cell">1</span></footer>

<nav class="taskbar">
  <button class="start" aria-label="Start"><svg width="38" height="38" viewBox="0 0 38 38"><defs><radialGradient id="orb" cx=".5" cy=".95" r=".9"><stop offset="0" stop-color="#1ce4ff"/><stop offset=".4" stop-color="#1672b0"/><stop offset=".75" stop-color="#2a5a86"/><stop offset="1" stop-color="#a8c4d8"/></radialGradient></defs><circle cx="19" cy="19" r="18" fill="url(#orb)" stroke="#6e8ea6" stroke-width="1.500"/><path d="M3 17a16 16 0 0132 0q-16-6-32 0z" fill="#fff" opacity=".3"/><path d="M11 10q4-3 8 0l-2 8q-4-3-8 0z" fill="#e8602c"/><path d="M20 11q4 3 9 0l-2 8q-5 3-9 0z" fill="#98c840"/><path d="M8 20q5-3 9 0l-2 8q-4-3-8 0z" fill="#58b0ec"/><path d="M18 21q4 3 9 0l-3 9q-4 2-8-1z" fill="#fcd038"/></svg></button>
  <button class="task" aria-label="Chrome"><svg width="28" height="28"><use href="#chrome"/></svg></button>
  <button class="task" aria-label="Notepad"><svg width="32" height="30" viewBox="0 0 32 30"><path d="M27 3l4 2-2 20-5 2z" fill="#8a6a30"/><path d="M11 3h17l-4 26L1 23z" fill="#e8f2f4"/><path d="M11 4h16l-6 22L1 21z" fill="#74bccb"/><path d="M11 4h8L8 23l-7-2z" fill="#a5dbe6"/><path d="M11 3h17" stroke="#777" stroke-width="3" stroke-dasharray="1 1"/></svg></button>
  <button class="task current" aria-label="Inventor"><svg width="32" height="32" viewBox="0 0 32 32"><defs><linearGradient id="inv" x1="1" y1="0" x2="0" y2="1"><stop offset="0" stop-color="#fff0dc"/><stop offset=".4" stop-color="#f5c490"/><stop offset="1" stop-color="#f08a28"/></linearGradient></defs><path d="M0 0h32v32H0z" fill="url(#inv)"/><path d="M9 3h14v5h-3v10h3v6H9v-6h3V8H9z" fill="#b83a04"/><path d="M9 3h14l-6 5v10l-3 6H9v-6h3V8H9z" fill="#d4561a"/><path d="M14 8l4-2v12l-4 3z" fill="#a02c00"/><text x="10" y="30" class="pro light">PRO</text></svg></button>
  <div class="tray">
    <svg viewBox="0 0 16 16"><path d="M0 0h16v16H0z" fill="#ee7a1a"/><path d="M8 2c3 2-3 3 0 6M4 9h7M5 11h5M3 13h10M11 9h3l-2 2" fill="none" stroke="#fff" stroke-width="1.300"/></svg>
    <svg viewBox="0 0 16 16"><path d="M4 1h7v14H4z" fill="#ddd"/><path d="M6 3h3v10H6z" fill="#777"/><circle cx="11" cy="11" r="5" fill="#1fa02c"/><path d="M8 11l2 2 4-4" fill="none" stroke="#fff" stroke-width="1.500"/></svg>
    <svg viewBox="0 0 16 16"><path d="M1 4l4-2h6v11H2L0 11z" fill="#b8c4cc"/><circle cx="11" cy="8" r="5.500" fill="#58b4f0"/><circle cx="11" cy="8" r="2" fill="#e8f8ff"/></svg>
    <svg viewBox="0 0 16 16"><use href="#chrome" x="1" y="1" width="14" height="14"/></svg>
    <svg viewBox="0 0 16 16"><path d="M1 1h14v13H1z" fill="#cc1010"/><path d="M3 12c4-2 6-6 5-9-2 3 2 7 5 6-3-1-7 0-10 3M11 3h3" fill="none" stroke="#fff" stroke-width="1.200"/></svg>
    <svg viewBox="0 0 16 16"><circle cx="8" cy="8" r="8" fill="#1c6098"/><path d="M1 9l3-4 2 5 3-7 2 6 3-3" fill="none" stroke="#9ad4f8" stroke-width="1.500"/><path d="M9 9h7v7H9z" fill="#36a838"/><path d="M10 12l2 2 3-3" fill="none" stroke="#fff"/></svg>
    <svg viewBox="0 0 16 16"><path d="M0 0h16v16H0z" fill="#f4f0e4"/><path d="M7 7l7 7-3 1-6-6" fill="#e4ac2c" stroke="#8a6414"/><circle cx="5" cy="5" r="3.500" fill="#f0c040" stroke="#8a6414"/><circle cx="4" cy="4" r="1" fill="#fff"/></svg>
    <svg viewBox="0 0 16 16"><path d="M5 0h11v11H5z" fill="#999"/><circle cx="10" cy="5" r="3" fill="none" stroke="#ddd"/><path d="M1 9h8v7H1z" fill="#ccc"/><path d="M3 9V7q2-3 4 0v2" fill="none" stroke="#ddd" stroke-width="1.400"/><path d="M4 11h2v3H4z" fill="#333"/></svg>
    <svg viewBox="0 0 16 16"><path d="M5 4h10v8H5zM10 12v3M7 15h7M1 1v4h4V1M3 5v5h2" fill="none" stroke="#fff" stroke-width="1.500"/></svg>
    <svg viewBox="0 0 16 16"><path d="M1 5h3l4-4v13l-4-4H1z" fill="#eee"/><circle cx="11" cy="11" r="4.500" fill="#fff" stroke="#d81818" stroke-width="2"/><path d="M8 8l6 6" stroke="#d81818" stroke-width="2"/></svg>
  </div>
  <time class="clock">9:16 AM<br>1/27/2015</time>
  <button class="peek" aria-label="Show desktop"></button>
</nav>
</body>
</html>
```
FILE: styles.css
```css
* { box-sizing: border-box; }
html, body { height: 100%; }
body {
  margin: 0;
  display: flex;
  flex-direction: column;
  overflow: hidden;
  background: #404040;
  color: #222;
  font: 11px/15px "Open Sans", sans-serif;
}
button, select, input { font: inherit; color: inherit; margin: 0; }
button { padding: 0; border: 0; background: none; display: flex; align-items: center; }
svg { flex: none; display: block; }
h1, h2 { margin: 0; font: inherit; }
.sprite { position: absolute; }

/* Title bar and tabs */
.top { display: flex; background: #404040; flex: none; }
.app-button {
  width: 41px; height: 42px; flex: none; justify-content: center;
  border: 1px solid #222; border-radius: 0 0 3px 3px;
  background: linear-gradient(#b5b5b5, #6f6f6f 55%, #9a9a9a);
}
.pro { font: bold 7px "Liberation Sans", sans-serif; fill: #111; }
.pro.light { fill: #fff; }
.top-rows { flex: 1; min-width: 0; }
.titlebar {
  display: flex; height: 24px;
  border-bottom: 1px solid #aeb6bd;
  background: linear-gradient(90deg, #353b42, #23272c);
}
.quick, .info { display: flex; align-items: center; background: linear-gradient(#8c8c8c, #595959); flex: none; }
.quick { width: 575px; padding-left: 8px; gap: 8px; border-right: 1px solid #222; }
.mini { color: #333; }
.sep { width: 1px; height: 19px; background: #444; border-right: 1px solid #888; box-sizing: content-box; }
.combo {
  display: flex; align-items: center; width: 98px; height: 20px; padding-right: 4px;
  margin: 0 -3px; background: linear-gradient(#f5f5f5, #d0d0d0); color: #111;
}
.combo select { appearance: none; border: 0; background: none; flex: 1; min-width: 0; padding: 0 0 0 5px; font-size: 12px; outline: 0; }
.swatch { margin-left: 2px; }
.look select { padding-left: 2px; }
.fx { font: italic bold 16px/18px "Liberation Serif", serif; color: #111; width: 16px; }
.fx sub { font-size: 10px; line-height: 8px; }
.more { width: 10px; }
.title {
  flex: 1; display: flex; gap: 22px; align-items: center;
  color: #000; font-size: 11px; white-space: nowrap; padding-left: 92px;
  background:
    radial-gradient(ellipse 44px 9px at 44px 13px, #5f7ca4 0, transparent 100%),
    linear-gradient(90deg, #8eb0da 0, #b4cbe8 120px, #aac4e4 160px, #3c4550 185px, #59636e 200px, #747a80 260px, #767b80 450px, #4a5058 570px, #2c323a 100%);
}
.info { width: 482px; color: #eee; gap: 8px; }
.collapse { width: 13px; height: 23px; justify-content: center; background: #999; border: 1px solid #555; }
.info input {
  width: 179px; height: 21px; margin-left: -8px; margin-right: -4px; padding: 2px 3px 0; border: 0; background: #f7f7f7;
  font-style: italic; color: #333; appearance: none;
}
.info input::placeholder { color: #666; }
.signin { gap: 5px; }
.signin .mini { margin-left: 49px; }
.help { gap: 7px; }
.help span { width: 16px; height: 16px; line-height: 15px; border-radius: 8px; background: #eef2fa; border: 1px solid #456; color: #1c3f94; font-size: 13px; font-weight: bold; }
.window-buttons { display: flex; align-items: flex-start; width: 122px; padding-left: 16px; background: linear-gradient(#2a3038, #6b757e); }
.window-buttons button {
  width: 28px; height: 18px; justify-content: center;
  border: 1px solid #ccc; border-top: 0; background: linear-gradient(#a9adb0, #55595d 50%, #74787c);
}
.window-buttons button:first-child { border-bottom-left-radius: 5px; }
.window-buttons .close { width: 48px; border-bottom-right-radius: 5px; background: linear-gradient(#d99080, #b83018 50%, #d0503a); }
.tabs { display: flex; height: 18px; padding-left: 2px; }
.tabs a { color: #f5f5f5; text-decoration: none; padding: 0 10px 0 11px; line-height: 18px; }
.tabs .active { background: linear-gradient(#fff, #eee 60%, #fff); color: #222; border-radius: 2px 2px 0 0; padding: 0 10px; }
.tabs button { margin-left: 23px; }

/* Ribbon */
.ribbon {
  display: flex; height: 96px; flex: none;
  border-top: 1px solid #fff; border-bottom: 2px solid #666;
  background: linear-gradient(#d6d6d6, #8d8d8d);
}
.group { display: flex; flex-direction: column; background: #fff; border-right: 1px solid #a0a0a0; flex: none; }
.group h2 {
  display: flex; justify-content: center; align-items: center; gap: 5px;
  height: 18px; padding-bottom: 2px; background: #eee; border-top: 1px solid #d0d0d0; color: #333;
}
.tools { display: flex; flex: 1; }
.big { display: block; position: relative; padding-top: 4px; text-align: center; align-self: flex-start; line-height: 15px; white-space: nowrap; color: #333; }
.big > svg:first-child { margin: 0 auto 3px; }
.below { margin: 2px auto 0; }
.corner { position: absolute; right: 6px; bottom: 12px; }
.stack { display: grid; grid-template-rows: repeat(3, 24px); grid-auto-flow: column; padding-top: 1px; align-content: start; }
.stack button { gap: 5px; white-space: nowrap; color: #333; }
.stack svg { width: 16px; height: 16px; }
.stack .drop { width: 5px; height: 3px; margin-left: 4px; }
.g-sketch { width: 79px; }
.g-prim { width: 63px; }
.g-sketch .big, .g-prim .big, .g-convert .big { flex: 1; }
.g-create { width: 234px; }
.g-create .big { width: 46px; }
.g-create .tools { padding-left: 1px; }
.g-create .stack { margin-left: 5px; grid-template-columns: 66px auto; }
.g-modify { width: 337px; }
.g-modify .tools { padding-left: 2px; }
.g-modify .big { width: 38px; }
.g-modify .stack { margin-left: 5px; grid-template-columns: 77px 80px auto; }
.g-work { width: 127px; }
.g-work .big { width: 56px; }
.g-work .stack { margin-left: 1px; }
.g-pattern { width: 99px; }
.g-surface { width: 210px; }
.g-plastic { width: 142px; }
.g-harness { width: 89px; }
.g-pattern .stack, .g-surface .stack, .g-plastic .stack, .g-harness .stack { margin-left: 7px; }
.g-surface .stack { grid-template-columns: 114px auto; }
.g-plastic .stack { grid-template-columns: 54px auto; }
.g-convert { width: 73px; }

/* Model browser */
.work { display: flex; flex: 1; min-height: 0; border-right: 2px solid #f0f0f0; }
.browser { display: flex; flex-direction: column; width: 247px; padding: 0 3px 3px; background: #f0f0f0; border-right: 1px solid #888; flex: none; }
.grip { display: flex; align-items: center; gap: 5px; height: 15px; }
.grip i { flex: 1; height: 5px; border: 1px solid #999; border-left: 0; background: #fff; }
.grip button { width: 10px; }
.panel-head { display: flex; justify-content: space-between; align-items: center; height: 21px; padding: 0 4px 0 8px; background: #ababab; color: #fff; }
.panel-head h2 { display: flex; align-items: center; gap: 4px; font: bold 12px/20px "Open Sans", sans-serif; }
.panel-head button { width: 13px; height: 14px; justify-content: center; border: 1px solid #222; background: #ffffb8; color: #000080; font-weight: bold; }
.panel-tools { display: flex; align-items: center; gap: 8px; height: 28px; padding: 0 4px 5px; }
.panel-tools i { width: 1px; height: 18px; background: #888; }
.tree { flex: 1; margin: 0; padding: 0; list-style: none; background: #fff; border: 1px solid #696969; font: 11px/18px Roboto, sans-serif; color: #000; }
.tree li { display: flex; align-items: center; height: 18px; gap: 2px; }
.tree svg { width: 16px; height: 16px; }
.tree .root { padding-left: 5px; }
.stem {
  display: flex; align-items: center; width: 24px; height: 18px; padding-left: 4px; margin-right: -2px;
  background:
    linear-gradient(#808080, #808080) 8px 0 / 1px 100% no-repeat,
    linear-gradient(#808080, #808080) 8px 9px / 12px 1px no-repeat;
}
.last .stem {
  background:
    linear-gradient(#808080, #808080) 8px 0 / 1px 9px no-repeat,
    linear-gradient(#808080, #808080) 8px 9px / 12px 1px no-repeat;
}
.stem svg { width: 9px; height: 9px; }

/* Graphics window */
.canvas { position: relative; flex: 1; min-width: 0; background: linear-gradient(#2d2d2d, #a4a4a4); }
.scene { position: absolute; inset: 0; width: 100%; height: 100%; }
.mdi { position: absolute; top: 6px; right: 2px; display: flex; gap: 8px; align-items: center; }
.cube { position: absolute; top: 41px; right: 14px; }
.cube-text { font: bold 9px "Liberation Sans", sans-serif; fill: #5c5c5e; }
.navbar {
  position: absolute; top: 145px; right: 1px; width: 34px; height: 198px;
  display: flex; flex-direction: column; align-items: center;
  padding-top: 1px; border: 2px solid #404040; border-radius: 5px; background: #808080;
}
.navbar > i { width: 26px; height: 1px; background: #555; margin: 5px 0 6px; }
.navbar .mini { margin: 8px 0 7px; color: #4a4a4a; }
.navbar i + button { margin-bottom: 7px; }
.navbar .tiny { align-self: flex-end; margin-right: 2px; }
.navbar .low { margin-top: 10px; }
.navbar .wheelnav { margin-top: 10px; }
.navbar .wheelnav + .mini { margin: 10px 0 0; }
.triad { position: absolute; left: 23px; bottom: 27px; }
.triad-text { font: 11px "Liberation Sans", sans-serif; }

/* Status bar and taskbar */
.status { display: flex; align-items: center; height: 26px; flex: none; padding: 4px 0 2px; background: linear-gradient(#fff 10%, #b2b2b2); color: #111; }
.msg { flex: 1; padding-left: 1px; font-size: 12px; }
.cell { width: 40px; height: 20px; line-height: 20px; padding-left: 9px; border-left: 1px solid #bbb; font-size: 12px; }
.taskbar { display: flex; height: 40px; flex: none; padding-top: 1px; gap: 4px; border-top: 1px solid #6d7784; background: linear-gradient(90deg, #05080b, #0a0f17 20%, #0a0f17 80%, #05080b); color: #fff; }
.start { width: 56px; justify-content: center; }
.task { width: 58px; justify-content: center; border: 1px solid #a8abae; border-radius: 3px; background: linear-gradient(160deg, #8a8d92, #3a3e42 45%, #1c2024 50%, #2c3034); }
.current { border-color: #e8e8e8; background: linear-gradient(160deg, #e0e0e2, #a4a6a8 45%, #77797b 50%, #a9abad); }
.tray { display: flex; align-items: center; gap: 8px; margin-left: auto; margin-right: 7px; }
.tray svg { width: 16px; height: 16px; }
.clock { width: 64px; padding-top: 2px; padding-right: 2px; text-align: center; line-height: 17px; }
.peek { width: 14px; border: 1px solid #77797c; background: linear-gradient(160deg, #55585c, #111 50%); }
```
